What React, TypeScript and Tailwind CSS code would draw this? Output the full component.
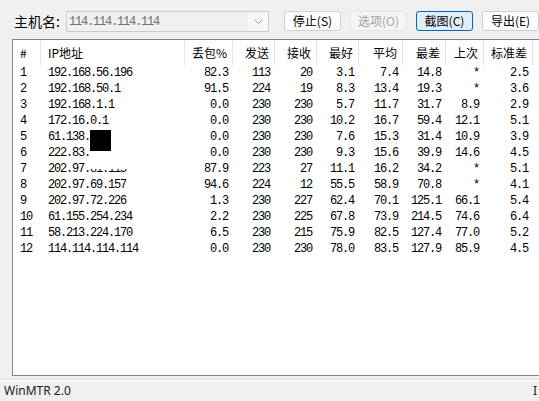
import React from "react";

type Hop = {
  n: number;
  ip: string;
  loss: string;
  sent: number;
  recv: number;
  best: string;
  avg: string;
  worst: string;
  last: string;
  stdev: string;
};

const hops: Hop[] = [
  { n: 1, ip: "192.168.56.196", loss: "82.3", sent: 113, recv: 20, best: "3.1", avg: "7.4", worst: "14.8", last: "*", stdev: "2.5" },
  { n: 2, ip: "192.168.50.1", loss: "91.5", sent: 224, recv: 19, best: "8.3", avg: "13.4", worst: "19.3", last: "*", stdev: "3.6" },
  { n: 3, ip: "192.168.1.1", loss: "0.0", sent: 230, recv: 230, best: "5.7", avg: "11.7", worst: "31.7", last: "8.9", stdev: "2.9" },
  { n: 4, ip: "172.16.0.1", loss: "0.0", sent: 230, recv: 230, best: "10.2", avg: "16.7", worst: "59.4", last: "12.1", stdev: "5.1" },
  { n: 5, ip: "61.138.", loss: "0.0", sent: 230, recv: 230, best: "7.6", avg: "15.3", worst: "31.4", last: "10.9", stdev: "3.9" },
  { n: 6, ip: "222.83.", loss: "0.0", sent: 230, recv: 230, best: "9.3", avg: "15.6", worst: "39.9", last: "14.6", stdev: "4.5" },
  { n: 7, ip: "202.97.81.115", loss: "87.9", sent: 223, recv: 27, best: "11.1", avg: "16.2", worst: "34.2", last: "*", stdev: "5.1" },
  { n: 8, ip: "202.97.69.157", loss: "94.6", sent: 224, recv: 12, best: "55.5", avg: "58.9", worst: "70.8", last: "*", stdev: "4.1" },
  { n: 9, ip: "202.97.72.226", loss: "1.3", sent: 230, recv: 227, best: "62.4", avg: "70.1", worst: "125.1", last: "66.1", stdev: "5.4" },
  { n: 10, ip: "61.155.254.234", loss: "2.2", sent: 230, recv: 225, best: "67.8", avg: "73.9", worst: "214.5", last: "74.6", stdev: "6.4" },
  { n: 11, ip: "58.213.224.170", loss: "6.5", sent: 230, recv: 215, best: "75.9", avg: "82.5", worst: "127.4", last: "77.0", stdev: "5.2" },
  { n: 12, ip: "114.114.114.114", loss: "0.0", sent: 230, recv: 230, best: "78.0", avg: "83.5", worst: "127.9", last: "85.9", stdev: "4.5" },
];

const mono = "font-['Liberation_Mono',monospace] text-[12px] tracking-[-1.2px]";
const cjk = "font-['Noto_Sans_CJK_SC',sans-serif]";

// column widths, left to right
const cols = [
  { key: "#", w: "w-[28px]", left: true },
  { key: "IP地址", w: "w-[144px]", left: true },
  { key: "丢包%", w: "w-[48px]" },
  { key: "发送", w: "w-[42px]" },
  { key: "接收", w: "w-[42px]" },
  { key: "最好", w: "w-[42px]" },
  { key: "平均", w: "w-[44px]" },
  { key: "最差", w: "w-[43px]" },
  { key: "上次", w: "w-[38px]" },
  { key: "标准差", w: "w-[49px]" },
];

function Button({ label, state }: { label: string; state?: "disabled" | "focus" }) {
  const look =
    state === "disabled"
      ? "bg-[#f5f5f5] border-[#e5e5e5] text-[#a3a3a3]"
      : state === "focus"
      ? "bg-[#e0eef9] border-[#0067c0] text-black"
      : "bg-[#fdfdfd] border-[#d0d0d0] text-black";
  return (
    <div
      className={`w-[57px] h-[20px] rounded-[3px] border flex items-center justify-center text-[12px] leading-none ${cjk} ${look}`}
    >
      {label}
    </div>
  );
}

export default function App() {
  return (
    <div className="w-[539px] h-[401px] bg-[#f0f0f0] flex flex-col overflow-hidden select-none">
      {/* toolbar */}
      <div className="h-[39px] shrink-0 flex items-start pt-[11px] pl-[14px]">
        <div className={`w-[52px] h-[21px] leading-[21px] text-[14px] text-black ${cjk}`}>主机名:</div>
        <div className="w-[203px] h-[21px] border border-[#cccccc] bg-[#f0f0f0] flex items-center">
          <div className={`flex-1 pl-[2px] text-[#6d6d6d] ${mono}`}>114.114.114.114</div>
          <div className="w-[20px] h-full flex items-center justify-center bg-[#f7f7f7]">
            <svg width="9" height="5" viewBox="0 0 9 5" fill="none">
              <path d="M0.5 0.5 L4.5 4.5 L8.5 0.5" stroke="#a0a0a0" strokeWidth="1" />
            </svg>
          </div>
        </div>
        <div className="ml-[15px] flex gap-[9px]">
          <Button label="停止(S)" />
          <Button label="选项(O)" state="disabled" />
          <Button label="截图(C)" state="focus" />
          <Button label="导出(E)" />
        </div>
      </div>

      {/* list view */}
      <div className="relative ml-[12px] h-[337px] shrink-0 bg-white border-t border-l border-b border-[#828790] overflow-hidden">
        <div className="flex h-[25px] w-[560px]">
          {cols.map((c) => (
            <div
              key={c.key}
              className={`${c.w} shrink-0 h-full border-r border-[#e5e5e5] flex items-center text-[12px] text-black ${cjk} ${
                c.left ? "justify-start pl-[7px]" : "justify-end pr-[5px]"
              }`}
            >
              {c.key}
            </div>
          ))}
        </div>
        {hops.map((h) => (
          <div key={h.n} className={`flex h-[16px] items-center text-black ${mono}`}>
            <div className="w-[28px] shrink-0 pl-[7px]">{h.n}</div>
            <div className="w-[144px] shrink-0 pl-[7px]">{h.ip}</div>
            <div className="w-[48px] shrink-0 text-right pr-[5px]">{h.loss}</div>
            <div className="w-[42px] shrink-0 text-right pr-[5px]">{h.sent}</div>
            <div className="w-[42px] shrink-0 text-right pr-[5px]">{h.recv}</div>
            <div className="w-[42px] shrink-0 text-right pr-[5px]">{h.best}</div>
            <div className="w-[44px] shrink-0 text-right pr-[5px]">{h.avg}</div>
            <div className="w-[43px] shrink-0 text-right pr-[5px]">{h.worst}</div>
            <div className="w-[38px] shrink-0 text-right pr-[5px]">{h.last}</div>
            <div className="w-[49px] shrink-0 text-right pr-[5px]">{h.stdev}</div>
          </div>
        ))}
        {/* redactions */}
        <div className="absolute left-[77px] top-[90px] w-[21px] h-[21px] bg-black" />
        <div className="absolute left-[76px] top-[120px] w-[50px] h-[9px] bg-white" />
      </div>

      {/* status bar */}
      <div className="h-[3px] shrink-0" />
      <div className="h-px shrink-0 bg-[#d9d9d9]" />
      <div className="h-px shrink-0 bg-white" />
      <div className="flex-1 flex items-center justify-between pl-[4px] pr-[2px] text-[12px] text-[#1a1a1a] font-['Noto_Sans',sans-serif]">
        <span>WinMTR 2.0</span>
        <span>I</span>
      </div>
    </div>
  );
}
